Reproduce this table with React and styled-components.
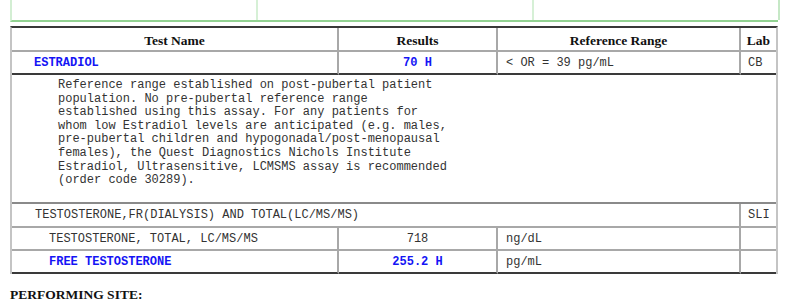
import React from 'react'
import styled, { createGlobalStyle } from 'styled-components';

const GlobalStyle = createGlobalStyle`
    html, body {
        margin: 0;
        padding: 0;
        background: #fff;
    }
    body {
        font-family: "Liberation Serif", "Times New Roman", serif;
        color: #000;
    }
`;

const comment = `Reference range established on post-pubertal patient
population. No pre-pubertal reference range
established using this assay. For any patients for
whom low Estradiol levels are anticipated (e.g. males,
pre-pubertal children and hypogonadal/post-menopausal
females), the Quest Diagnostics Nichols Institute
Estradiol, Ultrasensitive, LCMSMS assay is recommended
(order code 30289).`;

function App() {
    return (
        <Page>
            <GlobalStyle />
            <PrevTable>
                <PrevCell />
                <PrevCell />
                <PrevCell $last />
            </PrevTable>

            <Results>
                <Head>Test Name</Head>
                <Head>Results</Head>
                <Head>Reference Range</Head>
                <Head $last>Lab</Head>

                <Cell $indent={22} $flag $dark>ESTRADIOL</Cell>
                <Cell $center $flag $dark>70 H</Cell>
                <Cell $indent={8} $dark>&lt; OR = 39 pg/mL</Cell>
                <Cell $indent={7} $last $dark>CB</Cell>

                <Comment>{comment}</Comment>

                <Cell $indent={23} $span={3} $tall>TESTOSTERONE,FR(DIALYSIS) AND TOTAL(LC/MS/MS)</Cell>
                <Cell $indent={7} $last $tall>SLI</Cell>

                <Cell $indent={37}>TESTOSTERONE, TOTAL, LC/MS/MS</Cell>
                <Cell $center>718</Cell>
                <Cell $indent={8}>ng/dL</Cell>
                <Cell $last />

                <Cell $indent={37} $flag $bottom>FREE TESTOSTERONE</Cell>
                <Cell $center $flag $bottom>255.2 H</Cell>
                <Cell $indent={8} $bottom>pg/mL</Cell>
                <Cell $last $bottom />
            </Results>

            <SiteTitle>PERFORMING SITE:</SiteTitle>
        </Page>
    )
}

const Page = styled.div`
    width: 768px;
    padding: 0 0 0 10px;
`;

const PrevTable = styled.div`
    display: grid;
    grid-template-columns: 246px 276px 246px;
    height: 22px;
    border-left: 2px solid #d3eed3;
    border-bottom: 2px solid #92d292;
    box-sizing: border-box;
`;

const PrevCell = styled.div`
    border-right: 2px solid ${p => p.$last ? '#c6e8c6' : '#d6f0d6'};
`;

const Results = styled.div`
    display: grid;
    grid-template-columns: 327px 159px 243px 35px;
    margin-top: 4px;
    border-top: 2px solid #383838;
    border-left: 2px solid #c4c4c4;
    border-right: 2px solid #c4c4c4;
    width: 768px;
    box-sizing: border-box;
`;

const Head = styled.div`
    height: 24px;
    display: flex;
    align-items: center;
    justify-content: center;
    padding-top: 3px;
    box-sizing: border-box;
    font-family: "Liberation Serif", "Times New Roman", serif;
    font-weight: bold;
    font-size: 13.5px;
    color: #111;
    border-right: ${p => p.$last ? 'none' : '2px solid #a8a8a8'};
    border-bottom: 2px solid #a8a8a8;
`;

const Cell = styled.div`
    grid-column: span ${p => p.$span || 1};
    height: ${p => p.$tall ? 24 : 23}px;
    display: flex;
    align-items: center;
    justify-content: ${p => p.$center ? 'center' : 'flex-start'};
    padding-left: ${p => p.$indent || 0}px;
    box-sizing: border-box;
    font-family: "Liberation Mono", "Courier New", monospace;
    font-size: 12px;
    font-weight: ${p => p.$flag ? 'bold' : 'normal'};
    color: ${p => p.$flag ? '#1414f5' : '#333'};
    white-space: pre;
    border-right: ${p => p.$last ? 'none' : '2px solid #a8a8a8'};
    border-bottom: 2px solid ${p => (p.$dark || p.$bottom) ? '#3a3a3a' : '#a8a8a8'};
`;

const Comment = styled.div`
    grid-column: 1 / -1;
    height: 129px;
    box-sizing: border-box;
    padding: 4px 0 0 46px;
    font-family: "Liberation Mono", "Courier New", monospace;
    font-size: 12px;
    line-height: 13.6px;
    color: #333;
    white-space: pre;
    border-bottom: 2px solid #8a8a8a;
`;

const SiteTitle = styled.div`
    margin-top: 13px;
    font-family: "Liberation Serif", "Times New Roman", serif;
    font-weight: bold;
    font-size: 13.5px;
    color: #111;
`;

export default App;
